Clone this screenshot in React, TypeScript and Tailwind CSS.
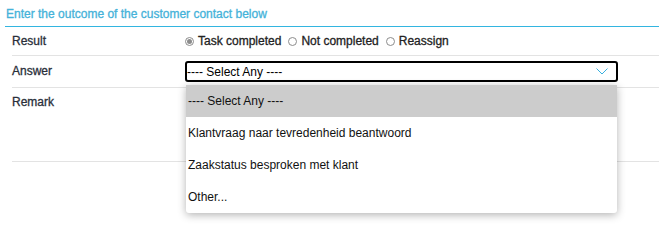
import React from 'react';

const options = [
  '---- Select Any ----',
  'Klantvraag naar tevredenheid beantwoord',
  'Zaakstatus besproken met klant',
  'Other...',
];

function Radio({ checked, label }: { checked?: boolean; label: string }) {
  return (
    <label className="flex items-center">
      <span className="flex h-[9px] w-[9px] items-center justify-center rounded-full border border-[#8c8c8c] bg-white">
        {checked && <span className="h-[5px] w-[5px] rounded-full bg-[#8c8c8c]" />}
      </span>
      <span className="ml-[4px] text-[#222] [-webkit-text-stroke:0.3px_#222]">{label}</span>
    </label>
  );
}

export default function App() {
  return (
    <div
      className="h-[237px] w-[659px] overflow-hidden bg-white text-[12px] leading-[14px]"
      style={{ fontFamily: '"Liberation Sans", Arial, sans-serif' }}
    >
      <div className="ml-[5px] h-[27px] border-b border-[#33b5e0] pl-[1px] pt-[7px] text-[#45b2d9] [-webkit-text-stroke:0.3px_#45b2d9]">
        Enter the outcome of the customer contact below
      </div>
      <div className="pl-[12px]">
        <div className="flex h-[29px] items-center border-b border-[#e3e3e3]">
          <div className="w-[173px] text-[#2a2f3a] [-webkit-text-stroke:0.3px_#2a2f3a]">Result</div>
          <div className="flex items-center gap-[7px]">
            <Radio checked label="Task completed" />
            <Radio label="Not completed" />
            <Radio label="Reassign" />
          </div>
        </div>
        <div className="flex h-[32px] items-center border-b border-[#e3e3e3]">
          <div className="w-[173px] pb-[2px] text-[#2a2f3a] [-webkit-text-stroke:0.3px_#2a2f3a]">Answer</div>
          <div className="relative">
            <div className="flex h-[21px] w-[433px] items-center justify-between rounded-[3px] border-2 border-black pr-[8px] text-black">
              <span>---- Select Any ----</span>
              <svg width="12" height="7" viewBox="0 0 12 7" fill="none">
                <path d="M0.5 0.5 L6 6 L11.5 0.5" stroke="#38b0df" strokeWidth="1" />
              </svg>
            </div>
            <div className="absolute left-[1px] top-[24px] z-10 w-[431px] rounded-b-[3px] bg-white shadow-[0_2px_8px_rgba(0,0,0,0.3)]">
              {options.map((o, i) => (
                <div
                  key={o}
                  className={`flex h-[32px] items-center pl-[2px] text-[#111] ${i === 0 ? 'bg-[#cccccc]' : ''}`}
                >
                  {o}
                </div>
              ))}
            </div>
          </div>
        </div>
        <div className="h-[74px] border-b border-[#e3e3e3] pt-[7px]">
          <div className="w-[173px] text-[#2a2f3a] [-webkit-text-stroke:0.3px_#2a2f3a]">Remark</div>
        </div>
      </div>
    </div>
  );
}
